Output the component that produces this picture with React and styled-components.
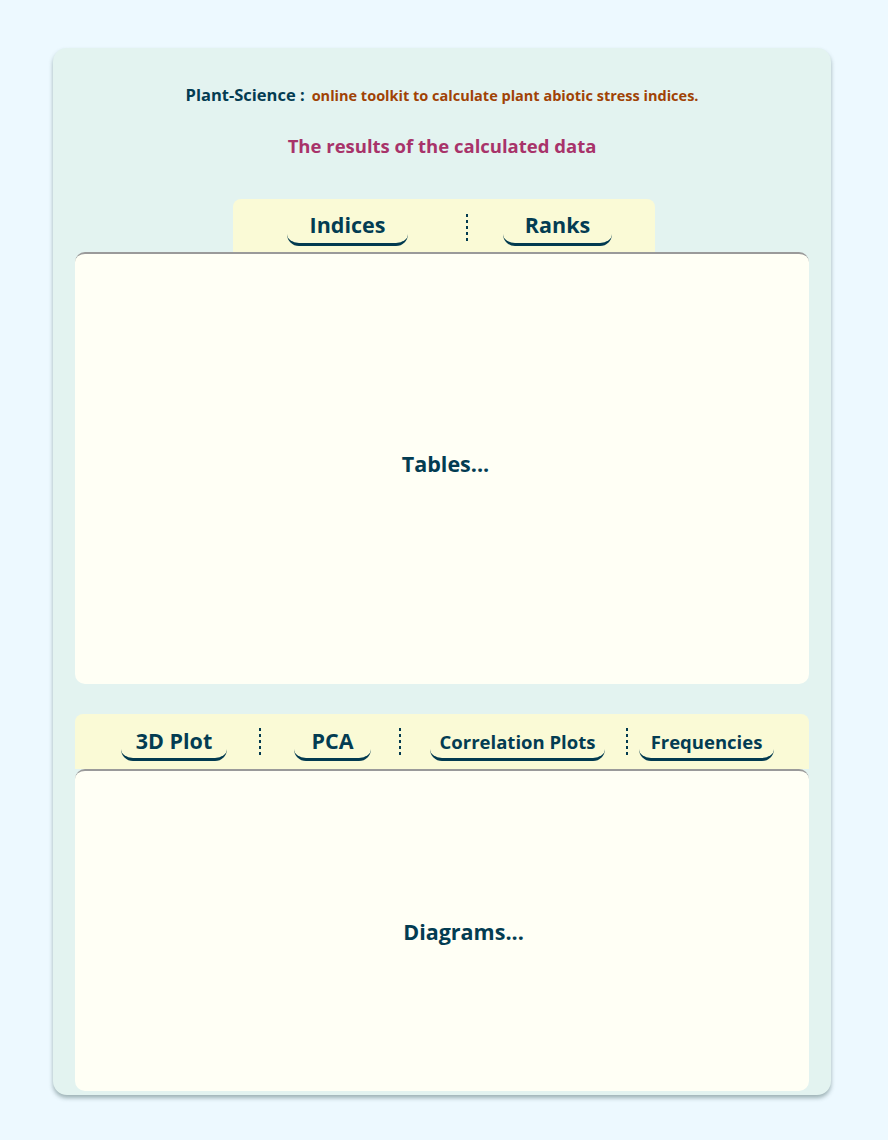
import React from "react";
import styled, { createGlobalStyle } from "styled-components";

const Global = createGlobalStyle`
  html, body { margin: 0; padding: 0; background: #edf9ff; }
  body { font-family: "Open Sans", "Noto Sans", sans-serif; }
`;

const Page = styled.div`
  padding: 48px 57px 40px 53px;
`;

const Card = styled.div`
  background: #e3f3f0;
  border-radius: 14px;
  box-shadow: 0 3px 4px rgba(60, 90, 90, 0.45);
  padding: 37px 22px 4px;
  display: flex;
  flex-direction: column;
  align-items: center;
`;

const Heading = styled.div`
  display: flex;
  align-items: baseline;
  gap: 7px;
  font-weight: 700;
  line-height: 20px;
`;

const Brand = styled.span`
  color: #033c52;
  font-size: 16.5px;
`;

const Tagline = styled.span`
  color: #a04205;
  font-size: 14.5px;
`;

const Subtitle = styled.div`
  margin-top: 29px;
  color: #a8336a;
  font-size: 18.5px;
  font-weight: 700;
  line-height: 22px;
`;

const TabBar = styled.div`
  margin-top: ${(p) => p.$top}px;
  align-self: ${(p) => (p.$full ? "stretch" : "center")};
  width: ${(p) => (p.$w ? `${p.$w}px` : "auto")};
  background: #fafad6;
  border-radius: 8px 8px 0 0;
  height: ${(p) => p.$h}px;
  display: flex;
  align-items: flex-start;
  padding-left: ${(p) => p.$pl}px;
  padding-top: ${(p) => p.$pt}px;
  box-sizing: border-box;
  margin-left: ${(p) => p.$ml || 0}px;
`;

const Tab = styled.div`
  margin-left: ${(p) => p.$ml}px;
  width: ${(p) => p.$w}px;
  height: ${(p) => p.$uh}px;
  box-sizing: border-box;
  border-bottom: 3px solid #023a50;
  border-radius: 0 0 12px 12px;
  display: flex;
  justify-content: center;
  color: #033c52;
  font-weight: 700;
  font-size: ${(p) => p.$fs}px;
  line-height: 1;
  white-space: nowrap;
  padding-top: ${(p) => p.$tp}px;
`;

const Sep = styled.div`
  margin-left: ${(p) => p.$ml}px;
  margin-top: ${(p) => p.$mt}px;
  width: 2px;
  height: 27px;
  background: repeating-linear-gradient(
    to bottom,
    #023a50 0 3px,
    transparent 3px 6px
  );
`;

const Panel = styled.div`
  align-self: stretch;
  background: #fffff5;
  border-top: 2px solid #9a9a9a;
  border-radius: 10px;
  height: ${(p) => p.$h}px;
  box-sizing: border-box;
  padding-left: ${(p) => p.$pl}px;
  padding-bottom: ${(p) => p.$pb}px;
  display: flex;
  align-items: center;
  justify-content: center;
  color: #033c52;
  font-weight: 700;
  font-size: 21.5px;
`;

export default function App() {
  return (
    <>
      <Global />
      <Page>
        <Card>
          <Heading>
            <Brand>Plant-Science :</Brand>
            <Tagline>online toolkit to calculate plant abiotic stress indices.</Tagline>
          </Heading>
          <Subtitle>The results of the calculated data</Subtitle>
          <TabBar $top={42} $h={53} $pl={54} $pt={13} $ml={4} $w={422}>
            <Tab $ml={0} $w={121} $uh={34} $fs={21.5} $tp={2}>Indices</Tab>
            <Sep $ml={58} $mt={2} />
            <Tab $ml={35} $w={109} $uh={34} $fs={21.5} $tp={2}>Ranks</Tab>
          </TabBar>
          <Panel $h={432} $pl={7} $pb={12}>Tables...</Panel>
          <TabBar $top={30} $h={55} $pl={46} $pt={14} $full>
            <Tab $ml={0} $w={106} $uh={33} $fs={21.5} $tp={2}>3D Plot</Tab>
            <Sep $ml={32} $mt={0} />
            <Tab $ml={33} $w={77} $uh={33} $fs={21.5} $tp={2}>PCA</Tab>
            <Sep $ml={28} $mt={0} />
            <Tab $ml={29} $w={175} $uh={33} $fs={18.5} $tp={5}>Correlation Plots</Tab>
            <Sep $ml={21} $mt={0} />
            <Tab $ml={11} $w={135} $uh={33} $fs={18.5} $tp={5}>Frequencies</Tab>
          </TabBar>
          <Panel $h={322} $pl={43} $pb={0}>Diagrams...</Panel>
        </Card>
      </Page>
    </>
  );
}
